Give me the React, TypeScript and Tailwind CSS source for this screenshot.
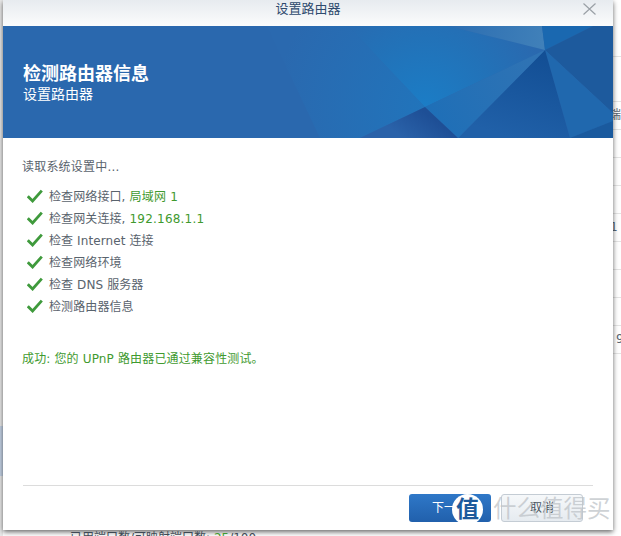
const FONT = "font-['DejaVu_Sans','Noto_Sans_CJK_SC',sans-serif]";

const STEPS = [
  { label: '检查网络接口,', value: '局域网 1' },
  { label: '检查网关连接,', value: '192.168.1.1' },
  { label: '检查 Internet 连接' },
  { label: '检查网络环境' },
  { label: '检查 DNS 服务器' },
  { label: '检测路由器信息' },
];

function BannerArt() {
  return (
    <svg className="absolute inset-0" width="610" height="112" viewBox="0 0 610 112">
      <defs>
        <radialGradient id="lit" gradientUnits="userSpaceOnUse" cx="422" cy="81" r="125">
          <stop offset="0" stopColor="#1b7dc6" />
          <stop offset="0.55" stopColor="#2272b8" />
          <stop offset="1" stopColor="#2a69af" />
        </radialGradient>
        <radialGradient id="mid" gradientUnits="userSpaceOnUse" cx="422" cy="81" r="150">
          <stop offset="0" stopColor="#2174bb" />
          <stop offset="1" stopColor="#2a69af" />
        </radialGradient>
        <linearGradient id="shine" gradientUnits="userSpaceOnUse" x1="445" y1="0" x2="540" y2="12">
          <stop offset="0" stopColor="#2b6db1" />
          <stop offset="1" stopColor="#4080b9" />
        </linearGradient>
        <linearGradient id="dark" gradientUnits="userSpaceOnUse" x1="535" y1="30" x2="510" y2="112">
          <stop offset="0" stopColor="#134f95" />
          <stop offset="1" stopColor="#2060a8" />
        </linearGradient>
        <linearGradient id="facet" gradientUnits="userSpaceOnUse" x1="430" y1="90" x2="530" y2="35">
          <stop offset="0" stopColor="#1f6fb7" />
          <stop offset="1" stopColor="#2f73b4" />
        </linearGradient>
        <linearGradient id="low" gradientUnits="userSpaceOnUse" x1="420" y1="85" x2="400" y2="112">
          <stop offset="0" stopColor="#1e4f96" />
          <stop offset="1" stopColor="#2a62a9" />
        </linearGradient>
      </defs>
      <polygon points="264,0 345,0 422,81 357,112 317,112" fill="url(#mid)" />
      <polygon points="345,0 445,0 542,24 422,81" fill="url(#lit)" />
      <polygon points="445,0 539,0 542,24" fill="url(#shine)" />
      <polygon points="539,0 590,0 542,24" fill="#1a68b0" />
      <polygon points="590,0 610,0 610,87 542,24" fill="#1d5a9d" />
      <polygon points="542,24 610,87 610,95 567,112" fill="#2068ae" />
      <polygon points="610,95 610,112 567,112" fill="#1a5a9e" />
      <polygon points="542,24 567,112 455,112" fill="url(#dark)" />
      <polygon points="542,24 455,112 422,81" fill="url(#facet)" />
      <polygon points="422,81 455,112 357,112" fill="url(#low)" />
    </svg>
  );
}

function CheckIcon() {
  return (
    <svg width="16" height="14" viewBox="0 0 16 14" className="shrink-0">
      <path d="M0.8 7.2 L5.6 12 L14.8 1.6" fill="none" stroke="#3f9a3c" strokeWidth="2.8" />
    </svg>
  );
}

export default function App() {
  return (
    <div className={`${FONT} flex h-[536px] w-[621px] overflow-hidden bg-white`}>
      {/* left edge of the page behind */}
      <div className="flex w-[3px] shrink-0 flex-col bg-[#e9e9e9]">
        <div className="h-[426px]" />
        <div className="h-[50px] bg-[#c5d3e6]" />
      </div>

      {/* dialog + text under it */}
      <div className="relative z-10 flex w-[610px] shrink-0 flex-col">
        <div className="flex h-[530px] shrink-0 flex-col bg-white shadow-[0_2px_5px_rgba(0,0,0,0.6)]">
          <div className="relative flex h-[26px] shrink-0 items-center justify-center bg-gradient-to-b from-[#e7ebef] to-[#fbfcfc] pb-[9px] pt-0">
            <span className="text-[13px] leading-[17px] text-[#2f4b6e]">设置路由器</span>
            <svg width="13" height="12" viewBox="0 0 13 12" className="absolute right-[17px] top-[3px]">
              <path d="M0.5 0.5 L12.5 11.5 M12.5 0.5 L0.5 11.5" stroke="#9aa0a6" strokeWidth="1.2" fill="none" />
            </svg>
          </div>

          <div className="relative flex h-[112px] shrink-0 flex-col bg-[#2a68ae] pl-5 pt-[37px] text-white">
            <BannerArt />
            <div className="relative text-[18px] font-bold leading-[22px]">检测路由器信息</div>
            <div className="relative text-[14px] leading-[18px]">设置路由器</div>
          </div>

          <div className="flex flex-1 flex-col px-5 text-[12px] text-[#59636d]">
            <div className="-ml-px mt-[21px] leading-4 tracking-[0.2px]">读取系统设置中...</div>
            <div className="mt-[11px] flex flex-col">
              {STEPS.map((step) => (
                <div key={step.label} className="flex h-[22px] items-center">
                  <span className="ml-[4px] mr-[6px] flex w-[16px] -translate-y-px justify-center">
                    <CheckIcon />
                  </span>
                  <span className="whitespace-nowrap tracking-[0.1px]">
                    {step.label}
                    {step.value && <span className="tracking-[0.2px] text-[#3f9a2f]"> {step.value}</span>}
                  </span>
                </div>
              ))}
            </div>
            <div className="mt-[33px] -ml-px leading-4 tracking-[0.15px] text-[#3f9a2f]">成功: 您的 UPnP 路由器已通过兼容性测试。</div>
            <div className="flex-1" />
            <div className="flex h-[45px] shrink-0 items-start justify-end gap-[10px] border-t border-[#dcdcdc] pr-[10px] pt-2">
              <button className="h-[28px] w-[82px] rounded-[3px] bg-gradient-to-b from-[#2f78c8] to-[#2160ac] text-[12px] text-white">
                下一步
              </button>
              <button className="h-[28px] w-[82px] rounded-[3px] border border-[#c4ccd4] bg-gradient-to-b from-[#f6f8fa] to-[#e6ebf0] text-[12px] text-[#4a5560]">
                取消
              </button>
            </div>
          </div>
        </div>
        <div className="pl-[67px] text-[12px] leading-4 text-[#3f4a55]">
          已用端口数/可映射端口数: <span className="text-[#3f9a2f]">25</span>/100
        </div>

        {/* site watermark over the buttons */}
        <div className="absolute left-[449px] top-[494px] flex h-[31px] w-[31px] items-center justify-center rounded-full bg-white text-[23px] font-bold leading-none text-[#1d5a9c]">
          值
        </div>
        <div className="absolute left-[490px] top-[494px] whitespace-nowrap text-[23.5px] leading-[30px] text-[rgba(190,195,200,0.75)]">
          什么值得买
        </div>
      </div>

      {/* right edge of the table behind */}
      <div className="flex flex-1 flex-col overflow-hidden whitespace-nowrap bg-white text-[12px] leading-[27px] text-[#5a6672]">
        <div className="h-[56px] shrink-0" />
        <div className="h-[45px] shrink-0 border-t border-[#e4e4e4]" />
        <div className="h-[28px] shrink-0 border-t border-[#e4e4e4] -indent-[4px]">端</div>
        <div className="h-[28px] shrink-0 border-t border-[#e4e4e4]" />
        <div className="h-[28px] shrink-0 border-t border-[#e4e4e4]" />
        <div className="h-[28px] shrink-0 border-t border-[#e4e4e4]" />
        <div className="h-[28px] shrink-0 border-t border-[#e4e4e4] -indent-[3px]">1</div>
        <div className="h-[28px] shrink-0 border-t border-[#e4e4e4]" />
        <div className="h-[28px] shrink-0 border-t border-[#e4e4e4]" />
        <div className="h-[28px] shrink-0 border-t border-[#e4e4e4]" />
        <div className="h-[28px] shrink-0 border-t border-[#e4e4e4] indent-[3px]">9</div>
        <div className="h-[28px] shrink-0 border-t border-[#e4e4e4]" />
      </div>
    </div>
  );
}
